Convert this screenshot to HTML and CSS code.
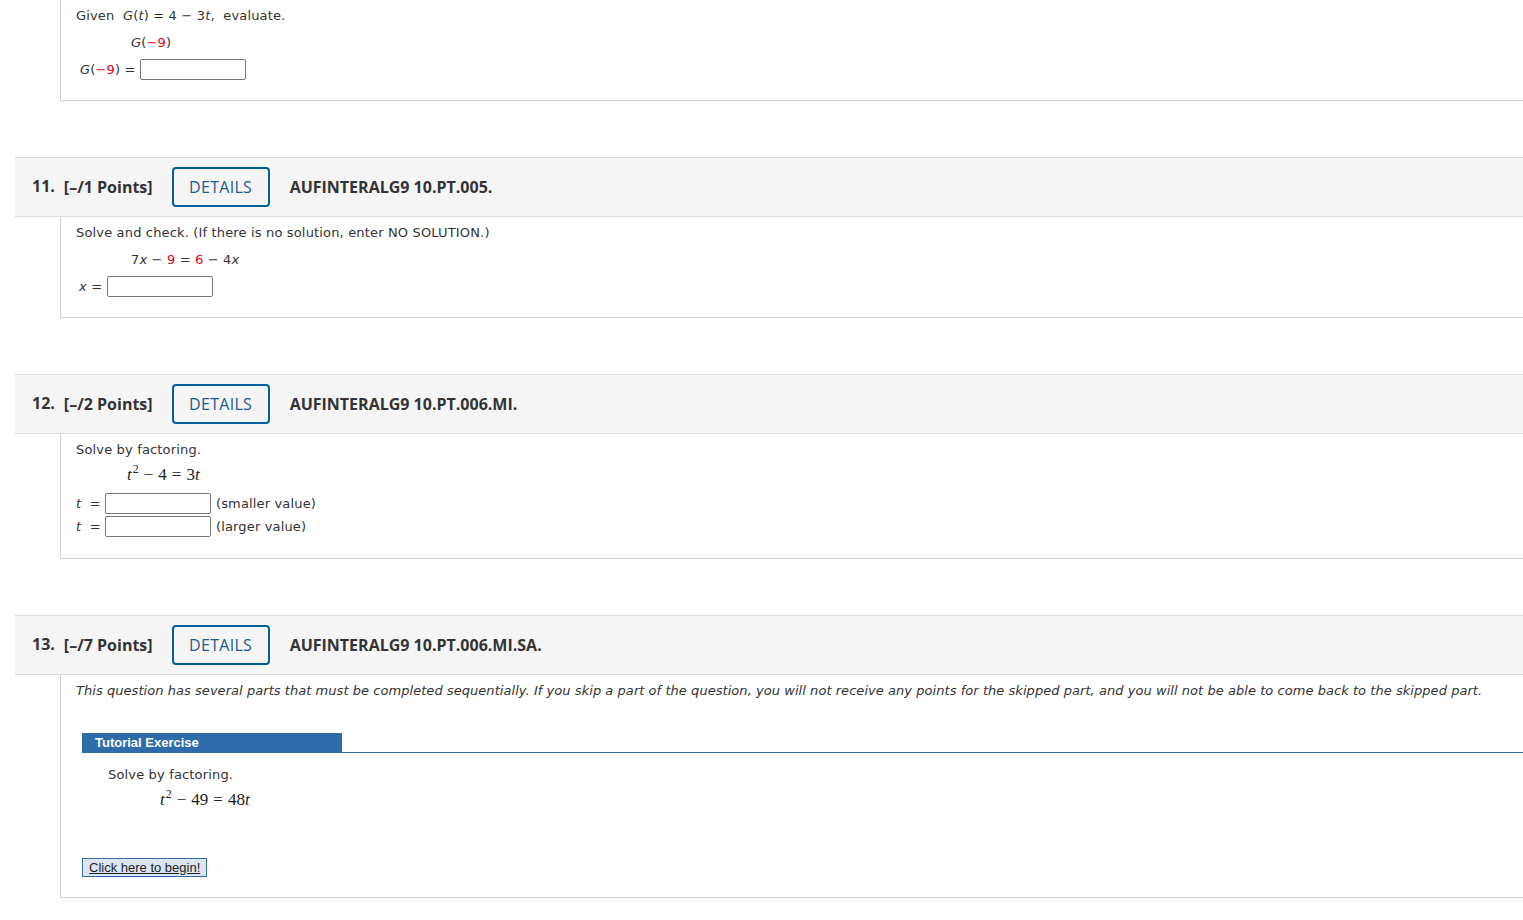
FILE: index.html
```html
<!DOCTYPE html>
<html lang="en">
<head>
<meta charset="utf-8">
<title>Questions</title>
<link rel="stylesheet" href="styles.css">
</head>
<body>
<div class="page">

  <div class="qbody first">
    <div class="prompt">Given&nbsp; <i>G</i>(<i>t</i>) = 4 − 3<i>t</i>,&nbsp; evaluate.</div>
    <div class="eq"><i>G</i>(<span class="red">−9</span>)</div>
    <div class="answer a10"><span class="lbl"><i>G</i>(<span class="red">−9</span>) =</span><span class="box"></span></div>
  </div>

  <div class="question">
    <div class="qhead">
      <span class="num">11.</span>
      <span class="pts">[–/1 Points]</span>
      <span class="details">DETAILS</span>
      <span class="code">AUFINTERALG9 10.PT.005.</span>
    </div>
    <div class="qbody">
      <div class="prompt">Solve and check. (If there is no solution, enter NO SOLUTION.)</div>
      <div class="eq">7<i>x</i> − <span class="red">9</span> = <span class="red">6</span> − 4<i>x</i></div>
      <div class="answer a11"><span class="lbl"><i>x</i> =</span><span class="box"></span></div>
    </div>
  </div>

  <div class="question">
    <div class="qhead">
      <span class="num">12.</span>
      <span class="pts">[–/2 Points]</span>
      <span class="details">DETAILS</span>
      <span class="code">AUFINTERALG9 10.PT.006.MI.</span>
    </div>
    <div class="qbody q12">
      <div class="prompt">Solve by factoring.</div>
      <div class="math m12"><i>t</i><sup>2</sup><span class="bin">−</span>4<span class="rel">=</span>3<i>t</i></div>
      <div class="answer a12 firstrow"><span class="lbl"><i>t</i>&nbsp; =</span><span class="box"></span><span class="note">(smaller value)</span></div>
      <div class="answer a12 second"><span class="lbl"><i>t</i>&nbsp; =</span><span class="box"></span><span class="note">(larger value)</span></div>
    </div>
  </div>

  <div class="question">
    <div class="qhead">
      <span class="num">13.</span>
      <span class="pts">[–/7 Points]</span>
      <span class="details">DETAILS</span>
      <span class="code">AUFINTERALG9 10.PT.006.MI.SA.</span>
    </div>
    <div class="qbody q13">
      <div class="prompt italic">This question has several parts that must be completed sequentially. If you skip a part of the question, you will not receive any points for the skipped part, and you will not be able to come back to the skipped part.</div>
      <div class="tutorial">
        <div class="tut-head"><span class="tut-title">Tutorial Exercise</span></div>
        <div class="tut-prompt">Solve by factoring.</div>
        <div class="math m13"><i>t</i><sup>2</sup><span class="bin">−</span>49<span class="rel">=</span>48<i>t</i></div>
        <span class="begin">Click here to begin!</span>
      </div>
    </div>
  </div>

</div>
</body>
</html>
```

FILE: styles.css
```css
html, body {
  margin: 0;
  padding: 0;
  background: #fff;
  overflow: hidden;
}

.page {
  width: 1600px;
  padding-left: 15px;
  font-family: "DejaVu Sans", Verdana, sans-serif;
  font-size: 13px;
  letter-spacing: 0.16px;
  color: #333;
}

.question {
  margin-top: 56px;
}

.qhead {
  display: flex;
  align-items: center;
  height: 58px;
  background: #f5f5f5;
  border-top: 1px solid #dcdcdc;
  border-bottom: 1px solid #dcdcdc;
  padding-left: 17px;
  font-family: "Open Sans", sans-serif;
  font-size: 16px;
  font-weight: 700;
  letter-spacing: 0;
  color: #333;
}

.num {
  position: relative;
  top: -1px;
  margin-right: 9px;
}

.pts {
  margin-right: 19px;
}

.details {
  box-sizing: border-box;
  width: 98px;
  height: 40px;
  display: flex;
  align-items: center;
  justify-content: center;
  border: 2px solid #00619a;
  border-radius: 4px;
  font-weight: 500;
  color: #1e5b8e;
  letter-spacing: 0.3px;
  margin-right: 20px;
}

.code {
  color: #333;
}

.qbody {
  margin-left: 45px;
  border-left: 1px solid #cfcfcf;
  border-bottom: 1px solid #cfcfcf;
  padding: 7px 15px 20px 15px;
}

.first {
  padding-top: 7px;
}

.prompt {
  line-height: 18px;
}

.italic {
  font-style: italic;
  letter-spacing: 0.05px;
}

.eq {
  line-height: 18px;
  margin-top: 9px;
  padding-left: 55px;
}

.red {
  color: #e8001c;
}

.answer {
  display: flex;
  align-items: center;
  margin-top: 7px;
  height: 21px;
}

.lbl {
  margin-right: 4px;
}

.a10 .lbl { padding-left: 4px; }
.a11 .lbl { padding-left: 3px; margin-right: 5px; }

.box {
  box-sizing: border-box;
  display: inline-block;
  width: 106px;
  height: 21px;
  border: 1px solid #767676;
  border-radius: 2px;
  background: #fff;
}

.note {
  margin-left: 5px;
}

.math {
  font-family: "Liberation Serif", "DejaVu Serif", serif;
  font-size: 17px;
  line-height: 20px;
  margin-top: 6px;
  letter-spacing: 0;
  color: #222;
}

.math sup {
  font-size: 12px;
  line-height: 0;
  margin-left: 1px;
}

.bin {
  margin: 0 5px;
}

.rel {
  margin: 0 5px;
}

.m12 {
  padding-left: 51px;
}

.q12 {
  padding-bottom: 21px;
}

.firstrow {
  margin-top: 8px;
}

.second {
  margin-top: 2px;
}

.q13 {
  padding-bottom: 20px;
}

.tutorial {
  margin-left: 6px;
  margin-top: 33px;
}

.tut-head {
  border-bottom: 1px solid #2d6ca8;
  height: 19px;
}

.tut-title {
  display: block;
  box-sizing: border-box;
  width: 260px;
  height: 19px;
  background: #2d6ca8;
  color: #fff;
  font-family: "Liberation Sans", Arial, sans-serif;
  font-weight: 700;
  font-size: 13px;
  letter-spacing: 0;
  line-height: 19px;
  padding-left: 13px;
}

.tut-prompt {
  line-height: 18px;
  margin-top: 13px;
  padding-left: 26px;
}

.m13 {
  padding-left: 78px;
}

.begin {
  display: inline-block;
  box-sizing: border-box;
  margin-top: 48px;
  height: 19px;
  padding: 0 6px;
  background: #dce6f2;
  border: 1px solid #356ba6;
  font-family: "Liberation Sans", Arial, sans-serif;
  font-size: 13px;
  letter-spacing: 0;
  line-height: 17px;
  color: #222;
  text-decoration: underline;
}
```
